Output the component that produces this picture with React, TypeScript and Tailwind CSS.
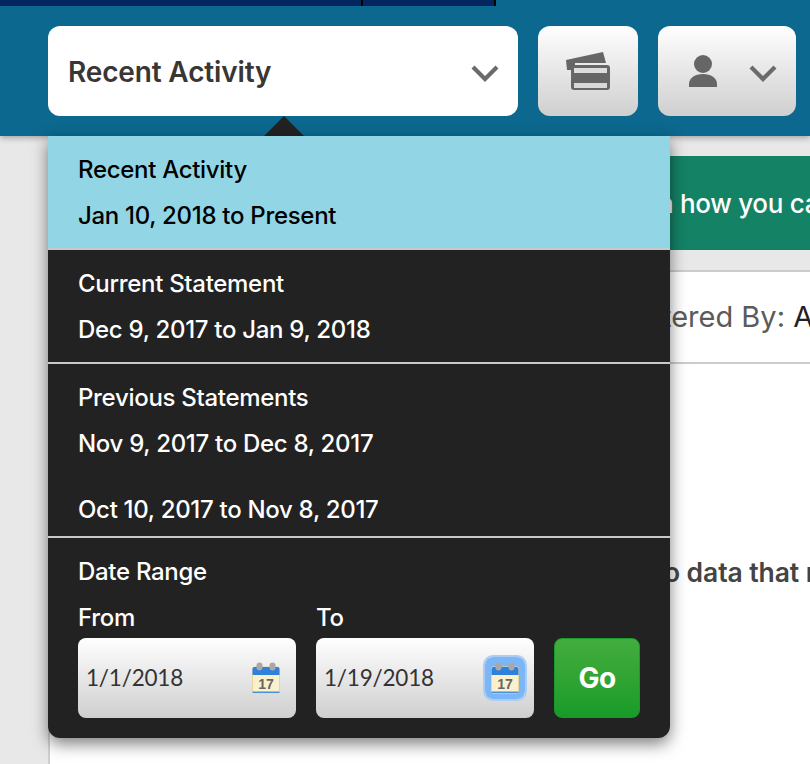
import React from 'react';

const font = "font-['Inter','Liberation_Sans',sans-serif]";
const menuText = 'h-8 text-[24px] font-[450] leading-8 tracking-[-0.3px]';

const Chevron: React.FC = () => (
  <svg width="28" height="18" viewBox="0 0 28 18" fill="none" stroke="#6b6b6b" strokeWidth="4.2">
    <path d="M2 3l12 12L26 3" />
  </svg>
);

const CalendarIcon: React.FC = () => (
  <svg width="30" height="32" viewBox="0 0 30 32">
    <rect x="1.5" y="5" width="27" height="26" rx="1.5" fill="#fbf0cc" stroke="#e6d7a0" />
    <path d="M1.5 13V7a2 2 0 0 1 2-2h23a2 2 0 0 1 2 2v6z" fill="#2f7fdc" />
    <rect x="1.5" y="29.5" width="27" height="1.5" fill="#4a90dc" />
    <rect x="5.5" y="0.5" width="6" height="8" rx="3" fill="#a8a8a8" />
    <rect x="18.5" y="0.5" width="6" height="8" rx="3" fill="#a8a8a8" />
    <text x="15" y="26.5" textAnchor="middle" fontSize="14" fontWeight="700" fill="#666" fontFamily="Liberation Sans, sans-serif">17</text>
  </svg>
);

const CardsIcon: React.FC = () => (
  <svg width="46" height="40" viewBox="0 0 46 40" className="blur-[0.4px]">
    <path d="M1 9 L38 1 L41 12 L10 12 L10 19 L2 19z" fill="#666" />
    <rect x="6" y="14" width="39" height="25" rx="3" fill="#666" />
    <rect x="9" y="17" width="33" height="5" fill="#ddd" />
    <rect x="9" y="32" width="33" height="5" fill="#d8d8d8" />
  </svg>
);

const UserIcon: React.FC = () => (
  <svg width="28" height="32" viewBox="0 0 28 32">
    <circle cx="14" cy="9" r="9" fill="#666" />
    <path d="M0 32v-3c0-6 6-10 14-10s14 4 14 10v3z" fill="#666" />
  </svg>
);

const DateField: React.FC<{ value: string; focused?: boolean }> = ({ value, focused }) => (
  <div className="flex h-20 w-[218px] items-center justify-between rounded-lg bg-gradient-to-b from-white to-[#cfcfcf] pl-2 pr-[15px]">
    <span className="text-[22.5px] tracking-[-0.2px] text-[#333] font-['Lato','Liberation_Sans',sans-serif]">{value}</span>
    {focused ? (
      <span className="-mr-[6px] flex rounded-lg bg-[#7db6f7] p-[5px] outline-2 outline-[#a9cdf3]">
        <CalendarIcon />
      </span>
    ) : (
      <CalendarIcon />
    )}
  </div>
);

const Row: React.FC<{ title: string; lines: string[]; active?: boolean }> = ({ title, lines, active }) => (
  <div className={`border-b-2 border-[#c9c9c9] px-[30px] pt-[18px] ${active ? 'bg-[#92d6e6] text-black' : 'text-white'}`}>
    <div className={menuText}>{title}</div>
    {lines.map((line, i) => (
      <div key={line} className={`${i === 0 ? 'mt-[14px]' : 'mt-[34px]'} ${menuText}`}>
        {line}
      </div>
    ))}
    <div className={lines.length > 1 ? 'h-[10px]' : 'h-4'} />
  </div>
);

export default function App() {
  return (
    <div className={`relative h-[764px] w-[810px] overflow-hidden bg-white ${font}`}>
      {/* Header */}
      <div className="relative z-10 bg-[#0c688e] shadow-[0_2px_6px_rgba(0,0,0,0.3)]">
        <div className="flex h-[6px]">
          <div className="w-[363px] border-r-2 border-black bg-[#03265f]" />
          <div className="w-[133px] border-r-2 border-black bg-[#03265f]" />
        </div>
        <div className="flex h-[130px] gap-5 pl-12 pt-5">
          <div className="flex h-[90px] w-[470px] items-center justify-between rounded-xl bg-white pl-5 pr-[19px]">
            <span className="pt-[2px] text-[28px] font-semibold tracking-[-0.15px] text-[#3a3633]">Recent Activity</span>
            <span className="pt-1"><Chevron /></span>
          </div>
          <div className="flex h-[90px] w-[100px] items-center justify-center rounded-xl bg-gradient-to-b from-white to-[#cfcfcf]">
            <CardsIcon />
          </div>
          <div className="flex h-[90px] w-[138px] items-center gap-[32px] rounded-xl bg-gradient-to-b from-white to-[#cfcfcf] pl-[31px]">
            <UserIcon />
            <span className="pt-1"><Chevron /></span>
          </div>
        </div>
      </div>

      {/* Page behind the menu */}
      <div className="flex h-[628px]">
        <div className="w-[50px] border-r-2 border-[#cfcfcf] bg-[#e8e8e8]" />
        <div className="min-w-0 flex-1 overflow-hidden whitespace-nowrap">
          <div className="bg-[#e8e8e8] py-5">
            <div className="flex h-[94px] items-center bg-[#138265] pl-[608px] text-[26px] font-medium tracking-[-0.3px] text-white">
              n how you ca
            </div>
          </div>
          <div className="flex h-[94px] items-center border-y-2 border-[#cccccc] pl-[612px] text-[29px] text-[#5b5b5b]">
            <span>tered By: <span className="text-[#222]">A</span></span>
          </div>
          <div className="pl-[614px] pt-[189px] text-[26.5px] font-semibold tracking-[-0.1px] text-[#444]">
            o data that r
          </div>
        </div>
      </div>

      {/* Dropdown menu */}
      <div className="absolute left-[264px] top-[116px] z-20 h-0 w-0 border-x-[20px] border-b-[20px] border-x-transparent border-b-[#222]" />
      <div className="absolute left-12 top-[136px] z-20 w-[622px] overflow-hidden rounded-b-xl bg-[#222] shadow-[0_6px_16px_rgba(0,0,0,0.5)]">
        <Row title="Recent Activity" lines={['Jan 10, 2018 to Present']} active />
        <Row title="Current Statement" lines={['Dec 9, 2017 to Jan 9, 2018']} />
        <Row title="Previous Statements" lines={['Nov 9, 2017 to Dec 8, 2017', 'Oct 10, 2017 to Nov 8, 2017']} />
        <div className="px-[30px] pb-5 pt-[18px] text-white">
          <div className={menuText}>Date Range</div>
          <div className="mt-[14px] flex items-end">
            <div className="mr-5">
              <div className={`mb-1 ${menuText}`}>From</div>
              <DateField value="1/1/2018" />
            </div>
            <div className="mr-5">
              <div className={`mb-1 ${menuText}`}>To</div>
              <DateField value="1/19/2018" focused />
            </div>
            <button className="flex h-20 w-[86px] items-center justify-center rounded-lg border border-[#1a9a2c] bg-gradient-to-b from-[#43ad3f] to-[#169b28] text-[28px] font-bold tracking-[-0.5px] text-white">
              Go
            </button>
          </div>
        </div>
      </div>
    </div>
  );
}
